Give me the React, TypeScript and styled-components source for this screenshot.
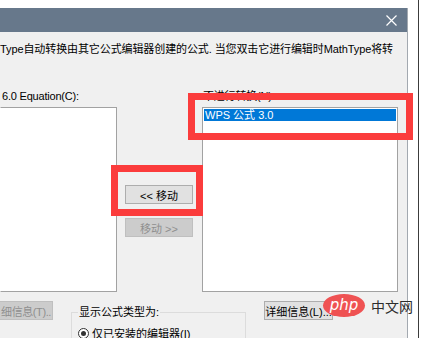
import React from 'react';
import styled, { createGlobalStyle } from 'styled-components';

const GlobalStyle = createGlobalStyle`
  html, body {
    margin: 0;
    padding: 0;
    background: #ffffff;
  }
  body {
    font-family: "Liberation Sans", "Noto Sans CJK SC", sans-serif;
    font-size: 11px;
    color: #000000;
  }
`;

const Page = styled.div`
  position: relative;
  display: flex;
  width: 422px;
  height: 338px;
  overflow: hidden;
  background: #ffffff;
`;

const Dialog = styled.div`
  align-self: flex-start;
  flex-shrink: 0;
  display: flex;
  flex-direction: column;
  width: 407px;
  margin-top: 8px;
  background: #f0f0f0;
  border-right: 1px solid #a3a9b0;

  & > * {
    flex-shrink: 0;
  }
`;

const TitleBar = styled.div`
  display: flex;
  align-items: center;
  justify-content: flex-end;
  height: 24px;
  padding-right: 10px;
  background: #67788b;
`;

const Description = styled.div`
  margin-top: 10px;
  height: 14px;
  line-height: 14px;
  white-space: nowrap;
  letter-spacing: -0.1px;
`;

const Columns = styled.div`
  display: grid;
  grid-template-columns: 117px 85px 196px;
  margin-top: 33px;
`;

const Column = styled.div`
  display: flex;
  flex-direction: column;
`;

const Label = styled.div<{ $indent: number }>`
  height: 14px;
  line-height: 14px;
  padding-left: ${({ $indent }) => $indent}px;
  white-space: nowrap;
  letter-spacing: -0.2px;
`;

const ListBox = styled.div<{ $open?: boolean }>`
  height: 185px;
  margin-top: 4px;
  box-sizing: border-box;
  background: #ffffff;
  border: 1px solid #a2a2a2;
  border-left-color: ${({ $open }) => ($open ? 'transparent' : '#a2a2a2')};
  padding: 1px;
`;

const ListItem = styled.div<{ $selected?: boolean }>`
  height: 12px;
  line-height: 12px;
  padding-left: 1px;
  color: ${({ $selected }) => ($selected ? '#ffffff' : '#000000')};
  background: ${({ $selected }) => ($selected ? '#0078d7' : 'transparent')};
  white-space: nowrap;
`;

const ButtonStack = styled.div`
  display: flex;
  flex-direction: column;
  gap: 14px;
  padding: 96px 0 0 8px;
`;

const Button = styled.div<{ $disabled?: boolean; $width: number }>`
  display: flex;
  align-items: center;
  justify-content: center;
  box-sizing: border-box;
  width: ${({ $width }) => $width}px;
  height: 19px;
  background: ${({ $disabled }) => ($disabled ? '#cccccc' : '#e1e1e1')};
  border: 1px solid ${({ $disabled }) => ($disabled ? '#bfbfbf' : '#adadad')};
  color: ${({ $disabled }) => ($disabled ? '#8f8f8f' : '#000000')};
  white-space: nowrap;
`;

const BottomRow = styled.div`
  display: flex;
  align-items: flex-start;
  margin-top: 9px;
`;

const CutButton = styled(Button)`
  justify-content: flex-end;
  padding-right: 1px;
  border-left: none;
  letter-spacing: -0.4px;
`;

const GroupBox = styled.fieldset`
  width: 175px;
  height: 40px;
  margin: 4px 0 0 18px;
  padding: 0 0 0 6px;
  box-sizing: border-box;
  border: 1px solid #dcdcdc;
  min-width: 0;
`;

const Legend = styled.legend`
  padding: 0 1px;
  margin-left: 0;
  line-height: 14px;
`;

const RadioRow = styled.div`
  display: flex;
  align-items: center;
  gap: 3px;
  margin-top: 6px;
  white-space: nowrap;
`;

const Radio = styled.span`
  display: flex;
  align-items: center;
  justify-content: center;
  width: 11px;
  height: 11px;
  box-sizing: border-box;
  border: 1px solid #333333;
  border-radius: 50%;
  background: #ffffff;

  &::after {
    content: '';
    width: 5px;
    height: 5px;
    border-radius: 50%;
    background: #333333;
  }
`;

const DetailButton = styled(Button)`
  margin-left: 18px;
`;

const Edge = styled.div`
  width: 1px;
  margin-left: 10px;
  background: #3c3c3c;
`;

const Highlight = styled.div<{ $x: number; $y: number; $w: number; $h: number }>`
  position: absolute;
  left: ${({ $x }) => $x}px;
  top: ${({ $y }) => $y}px;
  width: ${({ $w }) => $w}px;
  height: ${({ $h }) => $h}px;
  box-sizing: border-box;
  border: 7px solid #fb3c3c;
`;

const Watermark = styled.div`
  position: absolute;
  left: 323px;
  top: 294px;
  display: flex;
  align-items: center;
  gap: 6px;
`;

const PhpBadge = styled.span`
  display: flex;
  align-items: center;
  justify-content: center;
  width: 42px;
  height: 23px;
  border-radius: 50%;
  background: #ef5253;
  color: #ffffff;
  font-family: "DejaVu Sans", sans-serif;
  font-style: italic;
  font-size: 15px;
  padding-bottom: 2px;
  box-sizing: border-box;
`;

const SiteName = styled.span`
  font-family: "Noto Sans CJK SC", sans-serif;
  font-size: 14px;
  color: #2c2c2c;
`;

export default function App() {
  return (
    <>
      <GlobalStyle />
      <Page>
        <Dialog>
          <TitleBar>
            <svg width="11" height="11" viewBox="0 0 11 11">
              <path d="M0.5 0.5 L10.5 10.5 M10.5 0.5 L0.5 10.5" stroke="#ffffff" strokeWidth="1.2" />
            </svg>
          </TitleBar>
          <Description>
            Type自动转换由其它公式编辑器创建的公式. 当您双击它进行编辑时MathType将转
          </Description>
          <Columns>
            <Column>
              <Label $indent={2}>6.0 Equation(C):</Label>
              <ListBox $open />
            </Column>
            <ButtonStack>
              <Button $width={68}>&lt;&lt; 移动</Button>
              <Button $width={68} $disabled>
                移动 &gt;&gt;
              </Button>
            </ButtonStack>
            <Column>
              <Label $indent={1}>不进行转换(N):</Label>
              <ListBox>
                <ListItem $selected>WPS 公式 3.0</ListItem>
              </ListBox>
            </Column>
          </Columns>
          <BottomRow>
            <CutButton $width={53} $disabled>
              细信息(T)..
            </CutButton>
            <GroupBox>
              <Legend>显示公式类型为:</Legend>
              <RadioRow>
                <Radio />
                仅已安装的编辑器(I)
              </RadioRow>
            </GroupBox>
            <DetailButton $width={69}>详细信息(L)...</DetailButton>
          </BottomRow>
        </Dialog>
        <Edge />
        <Highlight $x={188} $y={93} $w={225} $h={47} />
        <Highlight $x={111} $y={165} $w={92} $h={51} />
        <Watermark>
          <PhpBadge>php</PhpBadge>
          <SiteName>中文网</SiteName>
        </Watermark>
      </Page>
    </>
  );
}
